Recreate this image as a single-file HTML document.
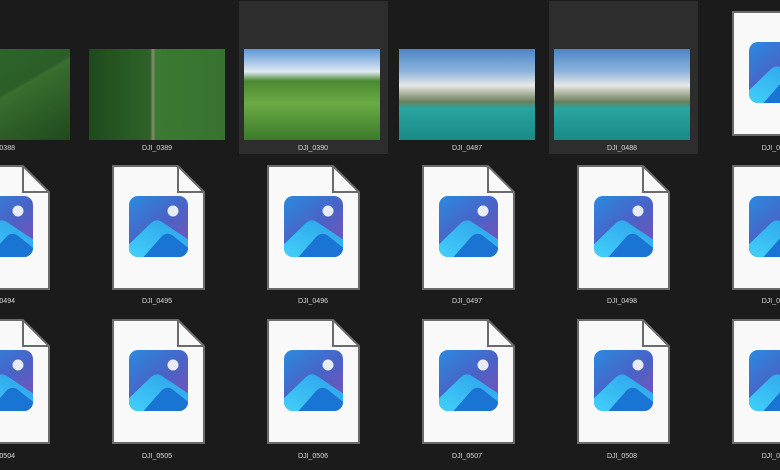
<!DOCTYPE html>
<html><head><style>
body{margin:0;width:780px;height:470px;background:#1b1b1b;overflow:hidden;position:relative;font-family:"Liberation Sans",sans-serif}
.a{position:absolute}
.l{position:absolute;width:150px;text-align:center;font-size:7px;color:#d8d8d8}
.t{position:absolute;width:136px;height:91px}
</style></head><body>
<svg width="0" height="0" style="position:absolute">
<defs>
<linearGradient id="bg" x1="0" y1="0" x2="0.8" y2="1"><stop offset="0" stop-color="#2a8ae0"/><stop offset="0.55" stop-color="#4a62c6"/><stop offset="1" stop-color="#7a52b8"/></linearGradient>
<linearGradient id="mt" x1="0" y1="1" x2="1" y2="0"><stop offset="0" stop-color="#45d6fc"/><stop offset="1" stop-color="#2a9de8"/></linearGradient>
<clipPath id="cp"><rect x="17" y="31" width="59" height="61" rx="9"/></clipPath>
<symbol id="f" viewBox="0 0 93 125">
<path d="M1 1H66L92 27V124H1Z" fill="#f9f9f9" stroke="#6a6a6a" stroke-width="2"/>
<path d="M66 1V27H92" fill="none" stroke="#6a6a6a" stroke-width="2"/>
<rect x="17" y="31" width="59" height="61" rx="9" fill="url(#bg)"/>
<g clip-path="url(#cp)">
<path d="M50 71Q55 67 60 70L80 84V96H26Z" fill="#1a74d4"/>
<path d="M10 86L38 59Q44 53 50 57L80 77V86L60 70Q55 67 50 71L28 96H10Z" fill="url(#mt)"/>
</g>
<circle cx="61" cy="46" r="5.5" fill="#e8ecf4"/>
</symbol>
</defs></svg>

<div class="a" style="left:239px;top:1px;width:149px;height:153px;background:#2d2d2d"></div>
<div class="a" style="left:549px;top:1px;width:149px;height:153px;background:#2d2d2d"></div>

<div class="t" style="left:-66px;top:49px;background:linear-gradient(150deg,#2f6a2c,#2b5e28 50%,#3a6e30 52%,#1f4a1d)"></div>
<div class="t" style="left:89px;top:49px;background:linear-gradient(90deg,#1f4a1c,#2e6328 45%,#8a8a70 47%,#3b7a32 49%,#377230)"></div>
<div class="t" style="left:244px;top:49px;background:linear-gradient(180deg,#5b96d8,#dfe9f2 25%,#4b8a32 35%,#6aab45 60%,#3c7a2a)"></div>
<div class="t" style="left:399px;top:49px;background:linear-gradient(180deg,#4a85c8,#8fb5dc 25%,#e8e8e8 40%,#6c7f5a 58%,#2aa4a0 65%,#1a8a86)"></div>
<div class="t" style="left:554px;top:49px;background:linear-gradient(180deg,#4a85c8,#8fb5dc 25%,#e8e8e8 40%,#6c7f5a 58%,#2aa4a0 65%,#1a8a86)"></div>
<svg class="a" style="left:732px;top:11px" width="48" height="125"><use href="#f" width="93" height="125"/></svg>

<div class="l" style="left:-75px;top:145px">DJI_0388</div>
<div class="l" style="left:82px;top:145px">DJI_0389</div>
<div class="l" style="left:238px;top:145px">DJI_0390</div>
<div class="l" style="left:392px;top:145px">DJI_0487</div>
<div class="l" style="left:547px;top:145px">DJI_0488</div>
<div class="l" style="left:702px;top:145px;width:78px;text-align:right">DJI_0</div>

<svg class="a" style="left:-43px;top:165px" width="93" height="125"><use href="#f"/></svg>
<svg class="a" style="left:112px;top:165px" width="93" height="125"><use href="#f"/></svg>
<svg class="a" style="left:267px;top:165px" width="93" height="125"><use href="#f"/></svg>
<svg class="a" style="left:422px;top:165px" width="93" height="125"><use href="#f"/></svg>
<svg class="a" style="left:577px;top:165px" width="93" height="125"><use href="#f"/></svg>
<svg class="a" style="left:732px;top:165px" width="48" height="125"><use href="#f" width="93" height="125"/></svg>
<div class="l" style="left:-75px;top:298px">DJI_0494</div>
<div class="l" style="left:82px;top:298px">DJI_0495</div>
<div class="l" style="left:238px;top:298px">DJI_0496</div>
<div class="l" style="left:392px;top:298px">DJI_0497</div>
<div class="l" style="left:547px;top:298px">DJI_0498</div>
<div class="l" style="left:702px;top:298px;width:78px;text-align:right">DJI_0</div>

<svg class="a" style="left:-43px;top:319px" width="93" height="125"><use href="#f"/></svg>
<svg class="a" style="left:112px;top:319px" width="93" height="125"><use href="#f"/></svg>
<svg class="a" style="left:267px;top:319px" width="93" height="125"><use href="#f"/></svg>
<svg class="a" style="left:422px;top:319px" width="93" height="125"><use href="#f"/></svg>
<svg class="a" style="left:577px;top:319px" width="93" height="125"><use href="#f"/></svg>
<svg class="a" style="left:732px;top:319px" width="48" height="125"><use href="#f" width="93" height="125"/></svg>
<div class="l" style="left:-75px;top:453px">DJI_0504</div>
<div class="l" style="left:82px;top:453px">DJI_0505</div>
<div class="l" style="left:238px;top:453px">DJI_0506</div>
<div class="l" style="left:392px;top:453px">DJI_0507</div>
<div class="l" style="left:547px;top:453px">DJI_0508</div>
<div class="l" style="left:702px;top:453px;width:78px;text-align:right">DJI_0</div>
</body></html>
